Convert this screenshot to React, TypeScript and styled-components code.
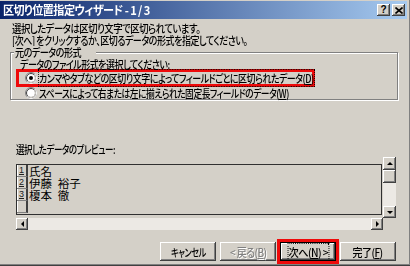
import React, { useLayoutEffect, useRef, useState } from "react";
import styled, { createGlobalStyle } from "styled-components";

const face = "#d4d0c8";
const shadow = "#808080";
const dark = "#404040";
const font = `"Noto Sans CJK JP", "Noto Sans", sans-serif`;

const GlobalStyle = createGlobalStyle`
  html, body { margin: 0; padding: 0; background: ${face}; }
  * { box-sizing: border-box; }
`;

const raised = `box-shadow: inset -1px -1px ${dark}, inset 1px 1px #fff, inset -2px -2px ${shadow}, inset 2px 2px ${face};`;

const Window = styled.div`
  width: 410px;
  height: 266px;
  background: ${face};
  font-family: ${font};
  font-size: 11px;
  font-weight: 500;
  font-feature-settings: "palt";
  color: #000;
  display: flex;
  flex-direction: column;
  padding: 1px 3px 0 0;
  box-shadow: inset 0 -1px ${dark}, inset 0 -2px ${shadow}, inset -1px 0 ${shadow};
  overflow: hidden;
`;

// text span squeezed to the width the dialog font gives it
const FitSpan = styled.span<{ $origin?: string }>`
  display: inline-block;
  letter-spacing: -0.6px;
  white-space: nowrap;
  transform-origin: ${p => p.$origin ?? "left"} center;
`;

const Fit: React.FC<{ w: number; origin?: string; children: React.ReactNode }> = ({ w, origin, children }) => {
  const ref = useRef<HTMLSpanElement>(null);
  const [scale, setScale] = useState(1);
  useLayoutEffect(() => {
    if (ref.current && ref.current.offsetWidth) setScale(w / ref.current.offsetWidth);
  }, [w]);
  return (
    <FitSpan ref={ref} $origin={origin} style={{ transform: `scaleX(${scale})` }}>
      {children}
    </FitSpan>
  );
};

const TitleBar = styled.div`
  height: 18px;
  flex: none;
  display: flex;
  align-items: center;
  padding: 0 2px 0 3px;
  background: linear-gradient(to right, #0a246a, #a6caf0);
  color: #fff;
  font-weight: bold;
  font-size: 12px;
  line-height: 18px;
  white-space: nowrap;
`;

const TitleButtons = styled.div`
  margin-left: auto;
  display: flex;
  gap: 2px;
`;

const TitleButton = styled.div`
  width: 13px;
  height: 12px;
  background: ${face};
  ${raised}
  display: flex;
  align-items: center;
  justify-content: center;
  color: #000;
  font-family: "Liberation Sans", sans-serif;
  font-size: 10px;
  font-weight: bold;
  line-height: 12px;
`;

const Body = styled.div`
  flex: 1;
  display: flex;
  flex-direction: column;
  padding: 3px 9px 0 10px;
`;

const TextLine = styled.div<{ $indent?: number }>`
  padding-left: ${p => p.$indent ?? 0}px;
  height: 12px;
  line-height: 12px;
  white-space: nowrap;
`;

const GroupFrame = styled.div`
  position: relative;
  margin-top: 6px;
  height: 48px;
  border: 1px solid ${shadow};
  box-shadow: 1px 1px 0 #fff, inset 1px 1px 0 #fff;
  padding: 5px 0 0 9px;
`;

const GroupLabel = styled.span`
  position: absolute;
  top: -7px;
  left: 3px;
  padding: 0 1px;
  background: ${face};
  line-height: 12px;
  height: 12px;
`;

const RadioRow = styled.div<{ $marked?: boolean }>`
  display: flex;
  align-items: center;
  gap: 2px;
  height: 12px;
  width: 293px;
  margin: ${p => (p.$marked ? "2px 0 0 -1px" : "3px 0 0 -1px")};
  padding-left: 6px;
  white-space: nowrap;
  line-height: 12px;
  outline: ${p => (p.$marked ? "3px solid #ee0a0a" : "none")};
`;

const FocusBox = styled.span<{ $on?: boolean }>`
  outline: ${p => (p.$on ? "1px dotted #000" : "none")};
`;

const Key = styled.span`
  text-decoration: underline;
`;

const PreviewLabel = styled(TextLine)`
  margin-top: 43px;
`;

const PreviewFrame = styled.div`
  margin: 2px 0 0 5px;
  width: 381px;
  height: 73px;
  display: grid;
  grid-template-columns: 1fr 13px;
  grid-template-rows: 1fr 12px;
`;

const DataCell = styled.div`
  padding: 7px 1px 0 1px;
`;

const DataBox = styled.div`
  height: 51px;
  border: 1px solid #303030;
  display: grid;
  grid-template-columns: 11px 1fr;
  grid-auto-rows: 12px;
  font-size: 11.5px;
  font-weight: 400;
  line-height: 12px;
`;

const RowHead = styled.div`
  border-right: 2px solid ${dark};
  border-bottom: 1px solid ${shadow};
  box-shadow: inset 1px 0 #fff;
  font-family: "Liberation Sans", sans-serif;
  font-size: 9px;
  line-height: 11px;
  text-decoration: underline;
  color: #202020;
  padding-left: 2px;
`;

const RowText = styled.div`
  padding-left: 1px;
  white-space: pre;
`;

const VScroll = styled.div`
  display: flex;
  flex-direction: column;
`;

const HScroll = styled.div`
  display: flex;
  padding-left: 1px;
`;

const ScrollBtn = styled.div<{ $w: number; $h: number }>`
  width: ${p => p.$w}px;
  height: ${p => p.$h}px;
  flex: none;
  background: ${face};
  ${raised}
  display: flex;
  align-items: center;
  justify-content: center;
`;

const Track = styled.div`
  flex: 1;
  background: #ece9e4;
`;

const ButtonRow = styled.div`
  margin-top: 12px;
  display: flex;
  justify-content: flex-end;
  gap: 4px;
  padding-right: 2px;
`;

const Button = styled.div<{ $default?: boolean; $disabled?: boolean; $marked?: boolean }>`
  width: 56px;
  height: 19px;
  background: ${face};
  display: flex;
  align-items: center;
  justify-content: center;
  white-space: nowrap;
  line-height: 12px;
  color: ${p => (p.$disabled ? shadow : "#000")};
  text-shadow: ${p => (p.$disabled ? "1px 1px 0 #fff" : "none")};
  border: ${p => (p.$default ? "1px solid #000" : "none")};
  ${raised}
  outline: ${p => (p.$marked ? "3px solid #ee0a0a" : "none")};
  outline-offset: 0;
`;

const Radio: React.FC<{ checked?: boolean }> = ({ checked }) => (
  <svg width="12" height="12" viewBox="0 0 12 12" style={{ flex: "none" }}>
    <circle cx="6" cy="6" r="5.5" fill="#fff" stroke={shadow} />
    <path d="M2.1 9.9 A5.5 5.5 0 0 0 9.9 2.1" stroke="#fff" fill="none" />
    <circle cx="6" cy="6" r="4.5" fill="#fff" stroke={dark} />
    <path d="M2.8 9.2 A4.5 4.5 0 0 0 9.2 2.8" stroke={face} fill="none" />
    {checked && <circle cx="6" cy="6" r="2" fill="#000" />}
  </svg>
);

const Arrow: React.FC<{ dir: "up" | "down" | "left" | "right" }> = ({ dir }) => {
  const pts = {
    up: "1,4 7,4 4,1",
    down: "1,1 7,1 4,4",
    left: "4,1 4,7 1,4",
    right: "1,1 1,7 4,4",
  }[dir];
  const vertical = dir === "up" || dir === "down";
  return (
    <svg width={vertical ? 8 : 5} height={vertical ? 5 : 8} viewBox={vertical ? "0 0 8 5" : "0 0 5 8"}>
      <polygon points={pts} fill="#000" />
    </svg>
  );
};

const CloseGlyph = () => (
  <svg width="8" height="7" viewBox="0 0 8 7">
    <path d="M0.5 0.5 L7.5 6.5 M7.5 0.5 L0.5 6.5" stroke="#000" strokeWidth="1.6" />
  </svg>
);

const rows = [
  { n: "1", text: "氏名" },
  { n: "2", text: "伊藤\u2002裕子" },
  { n: "3", text: "榎本\u2002徹" },
  { n: "", text: "" },
];

export default function App() {
  return (
    <>
      <GlobalStyle />
      <Window>
        <TitleBar>
          <Fit w={147}>区切り位置指定ウィザード - 1 / 3</Fit>
          <TitleButtons>
            <TitleButton>?</TitleButton>
            <TitleButton>
              <CloseGlyph />
            </TitleButton>
          </TitleButtons>
        </TitleBar>
        <Body>
          <TextLine $indent={2}>
            <Fit w={188}>選択したデータは区切り文字で区切られています。</Fit>
          </TextLine>
          <TextLine $indent={2}>
            <Fit w={235}>[次へ] をクリックするか、区切るデータの形式を指定してください。</Fit>
          </TextLine>
          <GroupFrame>
            <GroupLabel>
              <Fit w={66}>元のデータの形式</Fit>
            </GroupLabel>
            <TextLine>
              <Fit w={150}>データのファイル形式を選択してください:</Fit>
            </TextLine>
            <RadioRow $marked>
              <Radio checked />
              <Fit w={275}>
                <FocusBox $on>
                  カンマやタブなどの区切り文字によってフィールドごとに区切られたデータ(<Key>D</Key>)
                </FocusBox>
              </Fit>
            </RadioRow>
            <RadioRow>
              <Radio />
              <Fit w={250}>
                スペースによって右または左に揃えられた固定長フィールドのデータ(<Key>W</Key>)
              </Fit>
            </RadioRow>
          </GroupFrame>
          <PreviewLabel $indent={6}>
            <Fit w={99}>選択したデータのプレビュー:</Fit>
          </PreviewLabel>
          <PreviewFrame>
            <DataCell>
              <DataBox>
                {rows.map((r, i) => (
                  <React.Fragment key={i}>
                    <RowHead>{r.n}</RowHead>
                    <RowText>{r.text}</RowText>
                  </React.Fragment>
                ))}
              </DataBox>
            </DataCell>
            <VScroll>
              <ScrollBtn $w={13} $h={13}>
                <Arrow dir="up" />
              </ScrollBtn>
              <ScrollBtn $w={13} $h={13} />
              <Track />
              <ScrollBtn $w={13} $h={12}>
                <Arrow dir="down" />
              </ScrollBtn>
            </VScroll>
            <HScroll>
              <ScrollBtn $w={12} $h={12}>
                <Arrow dir="left" />
              </ScrollBtn>
              <Track />
              <ScrollBtn $w={12} $h={12}>
                <Arrow dir="right" />
              </ScrollBtn>
            </HScroll>
            <div />
          </PreviewFrame>
          <ButtonRow>
            <Button>
              <Fit w={35} origin="center">キャンセル</Fit>
            </Button>
            <Button $disabled>
              <Fit w={37} origin="center">
                &lt; 戻る(<Key>B</Key>)
              </Fit>
            </Button>
            <Button $default $marked>
              <Fit w={40} origin="center">
                <FocusBox $on>
                  次へ(<Key>N</Key>) &gt;
                </FocusBox>
              </Fit>
            </Button>
            <Button>
              <Fit w={30} origin="center">
                完了(<Key>F</Key>)
              </Fit>
            </Button>
          </ButtonRow>
        </Body>
      </Window>
    </>
  );
}
